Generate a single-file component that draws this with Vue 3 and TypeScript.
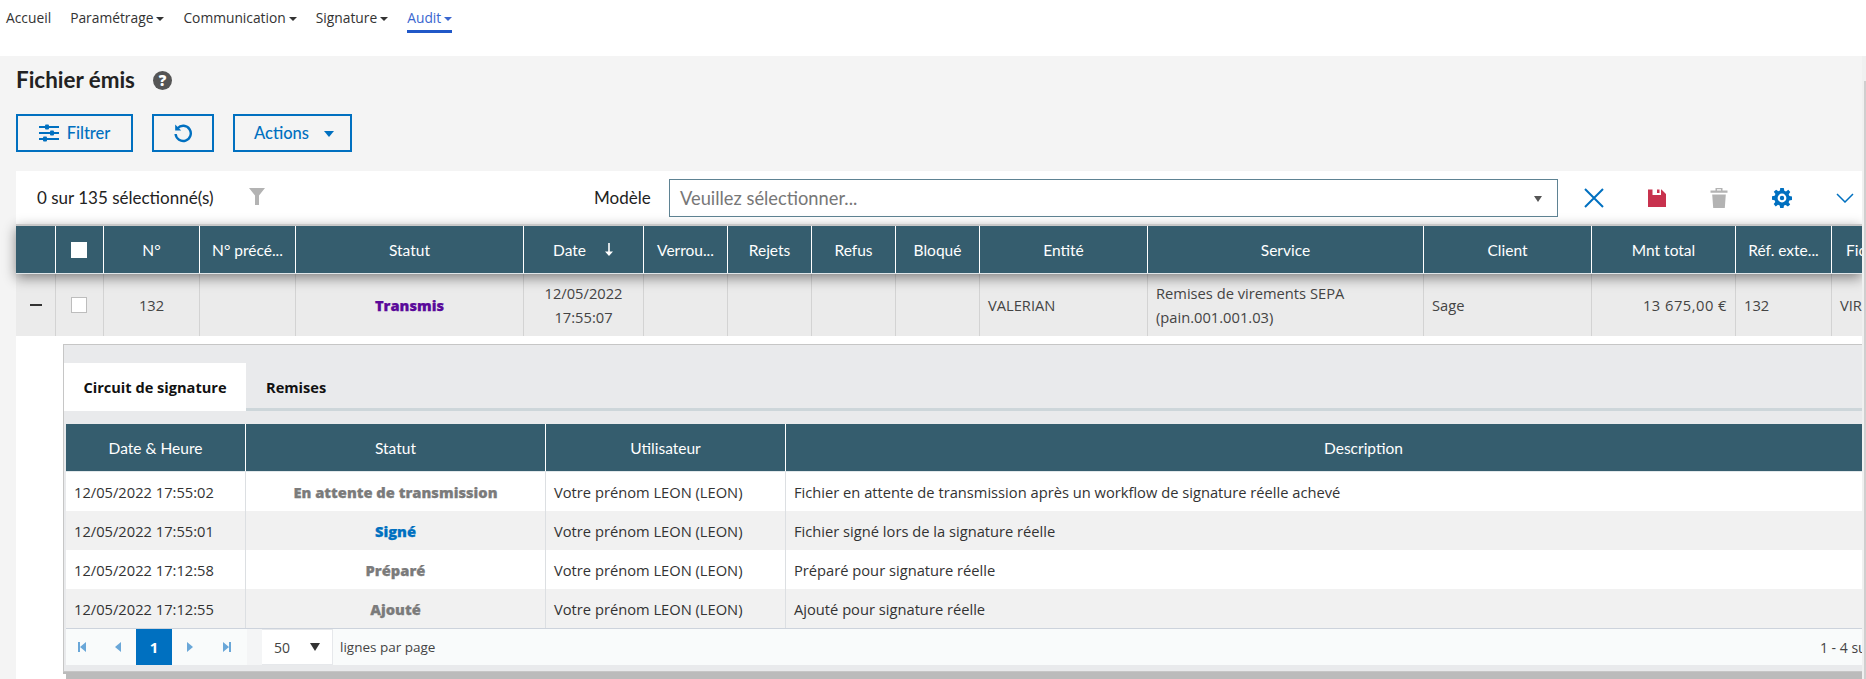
<script setup lang="ts">
const navItems = [
  { label: 'Accueil', caret: false, active: false },
  { label: 'Paramétrage', caret: true, active: false },
  { label: 'Communication', caret: true, active: false },
  { label: 'Signature', caret: true, active: false },
  { label: 'Audit', caret: true, active: true },
]
const headers = ['', 'CHECK', 'N°', 'N° précé...', 'Statut', 'Date', 'Verrou...', 'Rejets', 'Refus', 'Bloqué', 'Entité', 'Service', 'Client', 'Mnt total', 'Réf. exte...', 'Fichier']
const subHeaders = ['Date & Heure', 'Statut', 'Utilisateur', 'Description']
const history = [
  { date: '12/05/2022 17:55:02', statut: 'En attente de transmission', cls: 'grey', desc: 'Fichier en attente de transmission après un workflow de signature réelle achevé' },
  { date: '12/05/2022 17:55:01', statut: 'Signé', cls: 'blue', desc: 'Fichier signé lors de la signature réelle' },
  { date: '12/05/2022 17:12:58', statut: 'Préparé', cls: 'grey', desc: 'Préparé pour signature réelle' },
  { date: '12/05/2022 17:12:55', statut: 'Ajouté', cls: 'grey', desc: 'Ajouté pour signature réelle' },
]
</script>

<template>
  <div class="page">
    <nav class="nav">
      <a v-for="n in navItems" :key="n.label" class="nav-item" :class="{ active: n.active }">
        {{ n.label }}<i v-if="n.caret" class="nav-caret"></i>
      </a>
    </nav>

    <div class="body">
      <main class="main">
        <div class="title-row">
          <h1>Fichier émis</h1>
          <span class="help">?</span>
        </div>

        <div class="actions">
          <button class="btn filter">
            <svg width="20" height="18" viewBox="0 0 20 18" fill="#0070c0">
              <rect x="0" y="2" width="20" height="2" /><rect x="0" y="8" width="20" height="2" /><rect x="0" y="14" width="20" height="2" />
              <rect x="6" y="0.5" width="4" height="5" rx="1" /><rect x="11" y="6.5" width="4" height="5" rx="1" /><rect x="4" y="12.5" width="4" height="5" rx="1" />
            </svg>
            Filtrer
          </button>
          <button class="btn reset">
            <svg width="20" height="20" viewBox="0 0 20 20" fill="none" stroke="#0070c0" stroke-width="2.4">
              <path d="M4.6 5.2A7.6 7.6 0 1 1 2.6 11" />
              <path d="M2.2 1.6 8.2 7.6H2.2z" fill="#0070c0" stroke="none" />
            </svg>
          </button>
          <button class="btn act">Actions<i class="act-caret"></i></button>
        </div>

        <section class="card">
          <div class="toolbar">
            <span class="count">0 sur 135 sélectionné(s)</span>
            <svg class="funnel" width="16" height="17" viewBox="0 0 16 17" fill="#b3b3b3"><path d="M0 0h16L10 7.5V17H6V7.5z" /></svg>
            <label class="model-label">Modèle</label>
            <div class="select">
              <span>Veuillez sélectionner...</span>
              <i class="select-caret"></i>
            </div>
            <div class="tools">
              <svg width="20" height="20" viewBox="0 0 20 20" stroke="#0070c0" stroke-width="2" fill="none"><path d="M1 1l18 18M19 1 1 19" /></svg>
              <svg width="18" height="18" viewBox="0 0 18 18" fill="#c8324e"><path d="M0 .5h4.5v5.5h8.5V.5h.5L18 5v13H0z" /><path d="M9 .5h2.5v3.5H9z" /></svg>
              <svg width="18" height="20" viewBox="0 0 18 20" fill="#b3b3b3"><path d="M5.5 0h7v2.6h5v2.2H.5V2.6h5zM7 1.2v1.4h4V1.2zM2.2 6.5h13.6L14.8 20H3.2z" fill-rule="evenodd" /></svg>
              <svg width="20" height="20" viewBox="0 0 20 20"><path fill="#0070c0" fill-rule="evenodd" d="M8.2 0h3.6l.5 2.7 1.7.7 2.3-1.6 2 2.3-1.6 2.2.7 1.7 2.6.5v3.5l-2.7.5-.7 1.7 1.6 2.3-2.3 2-2.2-1.6-1.7.7-.5 2.6H8.2l-.5-2.7-1.7-.7-2.3 1.6-2-2.3 1.6-2.2-.7-1.7L0 11.8V8.2l2.7-.5.7-1.7L1.8 3.7l2.3-2 2.2 1.6L8 2.6zM10 5.6a4.4 4.4 0 1 0 0 8.8 4.4 4.4 0 0 0 0-8.8zm0 2.2a2.2 2.2 0 1 1 0 4.4 2.2 2.2 0 0 1 0-4.4z" /></svg>
              <svg width="18" height="10" viewBox="0 0 18 10" fill="none" stroke="#0070c0" stroke-width="1.5"><path d="M1 1l8 8 8-8" /></svg>
            </div>
          </div>

          <div class="grid head">
            <div v-for="(h, i) in headers" :key="i" class="th">
              <span v-if="h === 'CHECK'" class="check white"></span>
              <template v-else>{{ h }}</template>
              <svg v-if="h === 'Date'" class="sort" width="10" height="13" viewBox="0 0 10 13" fill="#fff"><path d="M4.2 0h1.6v8.5H9L5 13 1 8.5h3.2z" /></svg>
            </div>
          </div>

          <div class="grid row">
            <div class="td c"><i class="minus"></i></div>
            <div class="td c"><span class="check"></span></div>
            <div class="td c">132</div>
            <div class="td"></div>
            <div class="td c"><b class="status purple">Transmis</b></div>
            <div class="td c">12/05/2022<br />17:55:07</div>
            <div class="td"></div>
            <div class="td"></div>
            <div class="td"></div>
            <div class="td"></div>
            <div class="td">VALERIAN</div>
            <div class="td">Remises de virements SEPA<br />(pain.001.001.03)</div>
            <div class="td">Sage</div>
            <div class="td r">13 675,00 €</div>
            <div class="td">132</div>
            <div class="td clip">VIREMENT</div>
          </div>

          <div class="detail-wrap">
            <div class="detail">
              <div class="tabs">
                <span class="tab on">Circuit de signature</span>
                <span class="tab">Remises</span>
              </div>
              <div class="inner">
                <div class="igrid ihead">
                  <div v-for="h in subHeaders" :key="h" class="ith">{{ h }}</div>
                </div>
                <div v-for="(r, i) in history" :key="r.date" class="igrid irow" :class="{ odd: i % 2 === 1 }">
                  <div class="itd">{{ r.date }}</div>
                  <div class="itd c"><b class="status" :class="r.cls">{{ r.statut }}</b></div>
                  <div class="itd">Votre prénom LEON (LEON)</div>
                  <div class="itd">{{ r.desc }}</div>
                </div>
                <div class="pager">
                  <svg class="pi first" width="8" height="10" viewBox="0 0 8 10"><path d="M0 0h2v10H0zM8 0v10L2 5z" /></svg>
                  <svg class="pi prev" width="6" height="10" viewBox="0 0 6 10"><path d="M6 0v10L0 5z" /></svg>
                  <span class="page-on">1</span>
                  <svg class="pi next" width="6" height="10" viewBox="0 0 6 10"><path d="M0 0v10l6-5z" /></svg>
                  <svg class="pi last" width="8" height="10" viewBox="0 0 8 10"><path d="M0 0v10l6-5zM6 0h2v10H6z" /></svg>
                  <div class="size"><span>50</span><i class="size-caret"></i></div>
                  <span class="per">lignes par page</span>
                  <span class="total">1 - 4 sur 4</span>
                </div>
              </div>
            </div>
            <div class="under"></div>
          </div>
        </section>
      </main>
      <div class="scroll"><div class="thumb"></div></div>
    </div>
  </div>
</template>

<style>
html, body { margin: 0; height: 679px; overflow: hidden; background: #f4f4f4; }
</style>

<style scoped>
.page { width: 1866px; height: 679px; overflow: hidden; font-family: "Lato", "Open Sans", sans-serif; color: #333; display: flex; flex-direction: column; }
.nav { height: 56px; box-sizing: border-box; background: #fff; display: flex; align-items: flex-start; padding: 9px 0 0 6px; font-family: "Open Sans", sans-serif; font-size: 13.8px; color: #333; }
.nav-item { height: 24px; line-height: 18px; margin-right: 19px; box-sizing: border-box; white-space: nowrap; }
.nav-item.active { color: #3a66cf; border-bottom: 3px solid #2058c8; height: 24px; }
.nav-caret { display: inline-block; margin-left: 3px; vertical-align: 2px; border: 4px solid transparent; border-top-color: currentColor; border-bottom: 0; }
.body { flex: 1; display: flex; min-height: 0; }
.main { flex: 1; min-width: 0; padding-left: 16px; overflow: hidden; background: #f4f4f4; }
.scroll { width: 4px; background: #f0f0f0; padding-top: 25px; box-sizing: border-box; }
.thumb { width: 2px; height: 100%; margin-left: 2px; background: #cfcfcf; }
.title-row { display: flex; align-items: center; height: 48px; }
h1 { margin: 0; font-size: 22.4px; font-weight: 700; color: #222; line-height: 48px; }
.help { width: 19px; height: 19px; margin-left: 18px; border-radius: 50%; background: #555; color: #fff; font: 800 15px/19px "Open Sans", sans-serif; text-align: center; }
.actions { display: flex; gap: 19px; margin-top: 10px; height: 38px; }
.btn { height: 38px; box-sizing: border-box; border: 2px solid #0070c0; background: transparent; color: #0070c0; font: 500 16.5px "Lato", sans-serif; display: flex; align-items: center; justify-content: center; padding: 0; }
.filter { width: 117px; gap: 8px; }
.reset { width: 62px; }
.act { width: 119px; gap: 15px; padding-left: 3px; }
.act-caret { border: 5px solid transparent; border-top: 6px solid #0070c0; border-bottom: 0; margin-top: 2px; }
.card { margin-top: 19px; background: #fff; height: 508px; }
.toolbar { height: 53px; display: flex; align-items: center; font-size: 17px; color: #222; box-sizing: border-box; }
.count { margin-left: 21px; width: 212px; flex: none; }
.funnel { margin-top: -2px; flex: none; }
.model-label { margin-left: 329px; width: 75px; color: #222; flex: none; }
.select { width: 889px; flex: none; height: 38px; box-sizing: border-box; border: 1px solid #5f8393; display: flex; align-items: center; justify-content: space-between; padding: 0 15px 0 10px; color: #777; font-size: 18.3px; }
.select-caret { border: 4.5px solid transparent; border-top: 6px solid #555; border-bottom: 0; margin-top: 2px; }
.tools { display: flex; align-items: center; margin-left: 26px; flex: none; }
.tools svg { margin-right: 44px; flex: none; }
.grid { display: grid; grid-template-columns: 40px 48px 96px 96px 228px 120px 84px 84px 84px 84px 168px 276px 168px 144px 96px 120px; }
.head { height: 50px; border-top: 2px solid #c8c8c8; box-sizing: border-box; background: #355d6e; color: #fff; font-size: 15.5px; box-shadow: 0 4px 12px rgba(0, 0, 0, .45); position: relative; z-index: 1; border-bottom: 1px solid #dfe6e9; width: 1846px; overflow: hidden; }
.th { display: flex; align-items: center; justify-content: center; gap: 18px; border-right: 1px solid #fff; white-space: nowrap; overflow: hidden; }
.th:last-child { justify-content: flex-start; padding-left: 14px; border-right: 0; }
.row { height: 62px; background: #ebebeb; font-family: "Open Sans", sans-serif; font-size: 14.7px; color: #444; width: 1846px; overflow: hidden; }
.td { display: flex; align-items: center; box-sizing: border-box; padding: 0 8px; line-height: 24px; border-right: 1px solid #d3d3d3; white-space: nowrap; overflow: hidden; }
.td.c { justify-content: center; text-align: center; }
.td.r { justify-content: flex-end; letter-spacing: .5px; }
.td.clip { overflow: hidden; }
.minus { width: 12px; height: 2px; background: #333; }
.check { width: 16px; height: 16px; box-sizing: border-box; border: 1px solid #bdbdbd; background: #fff; display: block; margin-right: 2px; }
.check.white { border: 0; }
.status { font-family: "Open Sans", sans-serif; font-weight: 800; font-size: 14.7px; -webkit-text-stroke: 0.25px currentColor; }
.purple { color: #5a0a9a; }
.grey { color: #7b7b7b; }
.blue { color: #0070c0; }
.detail-wrap { padding: 8px 0 0 47px; position: relative; }
.detail { background: #e9eaec; border: 1px solid #c6c6c6; border-width: 1px 0 1px 1px; padding-top: 18px; height: 328px; box-sizing: border-box; box-shadow: 0 2px 0 #bbb; overflow: hidden; }
.tabs { display: flex; height: 48px; border-bottom: 3px solid #cdd6da; box-sizing: border-box; font-family: "Open Sans", sans-serif; font-weight: 700; font-size: 14.6px; color: #111; }
.tab { display: flex; align-items: center; padding: 0 20px; height: 48px; box-sizing: border-box; }
.tab.on { background: #fff; width: 182px; justify-content: center; padding: 0; }
.inner { margin: 13px 0 0 2px; }
.igrid { display: grid; grid-template-columns: 180px 300px 240px 1156px; }
.ihead { height: 48px; background: #355d6e; color: #fff; font-size: 15.5px; border-bottom: 1px solid #e2e8eb; box-sizing: border-box; }
.ith { display: flex; align-items: center; justify-content: center; border-right: 1px solid #fff; }
.irow { height: 39px; background: #fff; font-family: "Open Sans", sans-serif; font-size: 14.7px; color: #333; }
.irow.odd { background: #f1f1f1; }
.itd { display: flex; align-items: center; padding: 0 8px; border-right: 1px solid #dcdfe2; white-space: nowrap; }
.itd:last-child { border-right: 0; }
.itd.c { justify-content: center; }
.pager { height: 37px; width: 1796px; background: #f9fbfb; border-top: 1px solid #cdd3dc; box-sizing: border-box; display: flex; align-items: center; font-family: "Open Sans", sans-serif; font-size: 13px; color: #444; position: relative; }
.pi { fill: #6aa7d8; flex: none; }
.first { margin-left: 12px; }
.prev { margin-left: 29px; }
.page-on { width: 36px; height: 36px; margin-left: 15px; background: #0070c0; color: #fff; font-weight: 700; font-size: 15px; display: flex; align-items: center; justify-content: center; }
.next { margin-left: 15px; }
.last { margin-left: 30px; }
.size { width: 71px; height: 36px; box-sizing: border-box; margin-left: 31px; background: #fff; border: 1px solid #e6e8eb; border-left: 0; display: flex; align-items: center; justify-content: space-between; padding: 0 12px; font-size: 14px; box-shadow: -15px 0 0 #f4f5f6; }
.size-caret { border: 5px solid transparent; border-top: 8px solid #333; border-bottom: 0; }
.per { margin-left: 7px; font-size: 13.5px; }
.total { margin-left: auto; white-space: nowrap; position: relative; left: 22px; font-size: 14px; }
.under { height: 7px; background: #bbb; margin-left: 3px; }
</style>
